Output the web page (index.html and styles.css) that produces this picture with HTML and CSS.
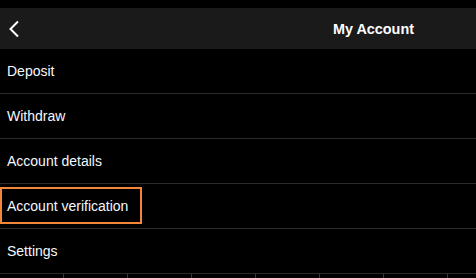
FILE: index.html
```html
<!DOCTYPE html>
<html lang="en">
<head>
  <meta charset="utf-8">
  <title>My Account</title>
  <link rel="stylesheet" href="styles.css">
</head>
<body>
  <div class="header">
    <a class="back" href="#">
      <svg width="12" height="18" viewBox="0 0 12 18"><path d="M10 1.5 L2.5 9 L10 16.5" fill="none" stroke="#fff" stroke-width="2"/></svg>
    </a>
    <span class="title">My Account</span>
  </div>

  <ul class="menu">
    <li><a href="#">Deposit</a></li>
    <li><a href="#">Withdraw</a></li>
    <li><a href="#">Account details</a></li>
    <li><a href="#" class="focused">Account verification</a></li>
    <li><a href="#">Settings</a></li>
  </ul>

  <div class="ticks">
    <span></span><span></span><span></span><span></span><span></span><span></span><span></span>
  </div>
</body>
</html>
```

FILE: styles.css
```css
html {
  overflow: hidden;
}

body {
  margin: 0;
  padding-top: 8px;
  background: #000;
  color: #f4f8ff;
  font-family: "Liberation Sans", Arial, sans-serif;
  font-size: 14px;
}

.header {
  display: flex;
  align-items: center;
  height: 41px;
  background: #1a1a1a;
}

.back {
  display: flex;
  padding: 0 0 0 8px;
}

.title {
  margin-left: auto;
  margin-right: 62px;
  font-size: 14.4px;
  font-weight: bold;
  color: #fff;
}

.menu {
  list-style: none;
  margin: 0;
  padding: 0;
}

.menu li {
  display: flex;
  align-items: center;
  height: 44px;
  border-bottom: 1px solid #2c2c2c;
}

.menu a {
  color: #f4f8ff;
  text-decoration: none;
  padding-left: 7px;
}

.menu a.focused {
  box-sizing: border-box;
  display: flex;
  align-items: center;
  width: 142px;
  height: 37px;
  margin-top: -1px;
  padding-left: 5px;
  border: 2px solid #f2873a;
}

.ticks {
  display: flex;
}

.ticks span {
  flex-shrink: 0;
  width: 63px;
  height: 5px;
  border-right: 1px solid #3a3a3a;
}
```
